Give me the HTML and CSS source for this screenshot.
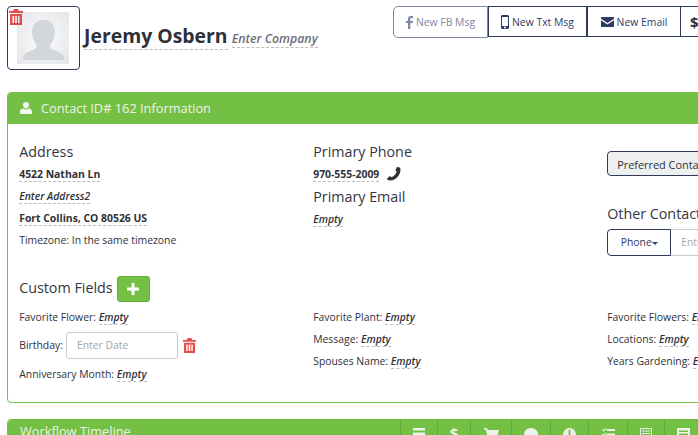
FILE: index.html
```html
<!DOCTYPE html>
<html lang="en">
<head>
  <meta charset="UTF-8" />
  <title>Contact 162</title>
  <link rel="stylesheet" href="styles.css">
</head>
<body>
  <div class="page">
    <div class="top">
      <div class="contact-head">
        <div class="avatar">
          <div class="avatar-img">
            <svg width="52" height="52" viewBox="0 0 52 52"><path fill="#d3d6da" d="M26 8c-7 0-11 5-11 12 0 5 2 9 4 12 1 2 1 4-1 5-3 2-9 3-11 6-1 1-1 3-1 5h41c0-2 0-4-1-5-2-3-8-4-11-6-2-1-2-3-1-5 2-3 4-7 4-12 0-7-4-12-11-12z"/></svg>
          </div>
          <svg class="avatar-trash" width="14" height="16" viewBox="0 0 14 16"><path fill="#e0504f" d="M0 2h4l1-2h4l1 2h4v2H0zM1 5h12v11H1zM3.500 7v7h1.500V7zM6.200 7v7h1.600V7zM9 7v7h1.500V7z" fill-rule="evenodd"/></svg>
        </div>
        <h1 class="name"><span class="editable">Jeremy Osbern</span> <small class="editable company">Enter Company</small></h1>
      </div>
      <div class="msg-btns">
        <a class="msg-btn msg-fb"><svg width="7" height="13" viewBox="0 0 7 13"><path fill="#7d88a3" d="M2 13V7H0V5h2V3c0-2 1-3 3-3h2v2H5.500C4.500 2 4.300 2.500 4.300 3.200V5H7L6.600 7H4.300v6z"/></svg> New FB Msg</a>
        <a class="msg-btn msg-txt"><svg width="8" height="14" viewBox="0 0 8 14"><path fill="#2d3a66" fill-rule="evenodd" d="M1.500 0h5C7.400 0 8 .6 8 1.500v11c0 .9-.6 1.500-1.500 1.500h-5C.6 14 0 13.400 0 12.500v-11C0 .6.600 0 1.500 0zM1 2v9h6V2zM4 11.500a1 1 0 1 0 0 2 1 1 0 0 0 0-2z"/></svg> New Txt Msg</a>
        <a class="msg-btn msg-email"><svg width="13" height="10" viewBox="0 0 13 10"><path fill="#2d3a66" d="M1 0h11c.6 0 1 .4 1 1v.8L6.500 6 0 1.800V1c0-.6.400-1 1-1zM0 3.300l6.500 4.200L13 3.300V9c0 .6-.4 1-1 1H1c-.6 0-1-.4-1-1z"/></svg> New Email</a>
        <a class="msg-btn msg-money"><b>$</b> New Invoice</a>
      </div>
    </div>

    <section class="panel">
      <div class="panel-heading">
        <svg width="12" height="12" viewBox="0 0 12 12"><path fill="#f1f5ee" d="M6 0a3 3 0 0 1 3 3.200C9 5 7.700 6.400 6 6.400S3 5 3 3.200A3 3 0 0 1 6 0zM3.200 6.600C4 7.200 5 7.500 6 7.500s2-.3 2.800-.9C10.800 6.800 12 8 12 10v1c0 .6-.4 1-1 1H1c-.6 0-1-.4-1-1v-1c0-2 1.200-3.200 3.200-3.400z"/></svg>
        <span>Contact ID# 162 Information</span>
      </div>
      <div class="panel-body">
        <div class="row row-info">
          <div class="col">
            <h4>Address</h4>
            <p class="line strong"><span class="editable">4522 Nathan Ln</span></p>
            <p class="line"><em class="editable">Enter Address2</em></p>
            <p class="line strong"><span class="editable">Fort Collins,</span> <span class="editable">CO 80526 US</span></p>
            <p class="line">Timezone: In the same timezone</p>
          </div>
          <div class="col">
            <h4>Primary Phone</h4>
            <p class="line strong phone"><span class="editable">970-555-2009</span>
              <svg width="14" height="14" viewBox="0 0 14 14"><path fill="#2f3138" d="M13.500 2.500c0 6-5 11-10.500 11-.8 0-1.600-.2-2.300-.5L0 11.500l3-2.500 1.600 1.300C7 9.500 9 7 9.700 4.600L8.300 3.300 10 0l2 .3c1 .4 1.500 1.200 1.500 2.200z"/></svg>
            </p>
            <h4 class="email-title">Primary Email</h4>
            <p class="line"><em class="editable">Empty</em></p>
          </div>
          <div class="col">
            <div class="preferred">Preferred Contact Method</div>
            <h4 class="other-title">Other Contact Methods</h4>
            <div class="other-input">
              <div class="phone-btn">Phone<i class="caret"></i></div>
              <div class="enter-box">Enter Phone Number</div>
            </div>
          </div>
        </div>

        <h4 class="custom-title"><span class="custom-label">Custom Fields</span> <span class="add-btn"><svg width="12" height="12" viewBox="0 0 12 12"><path fill="#fff" d="M4.500 0h3v4.500H12v3H7.500V12h-3V7.500H0v-3h4.500z"/></svg></span></h4>
        <div class="row">
          <div class="col">
            <p class="field">Favorite Flower: <em class="editable">Empty</em></p>
            <div class="field field-date">Birthday: <div class="date-input">Enter Date</div>
              <svg width="13" height="15" viewBox="0 0 14 16"><path fill="#e0504f" fill-rule="evenodd" d="M0 2h4l1-2h4l1 2h4v2H0zM1 5h12v11H1zM3.500 7v7h1.500V7zM6.200 7v7h1.600V7zM9 7v7h1.500V7z"/></svg>
            </div>
            <p class="field">Anniversary Month: <em class="editable">Empty</em></p>
          </div>
          <div class="col">
            <p class="field">Favorite Plant: <em class="editable">Empty</em></p>
            <p class="field">Message: <em class="editable">Empty</em></p>
            <p class="field">Spouses Name: <em class="editable">Empty</em></p>
          </div>
          <div class="col">
            <p class="field">Favorite Flowers: <em class="editable">Empty</em></p>
            <p class="field">Locations: <em class="editable">Empty</em></p>
            <p class="field">Years Gardening: <em class="editable">Empty</em></p>
          </div>
        </div>
      </div>
    </section>

    <section class="panel timeline">
      <div class="panel-heading timeline-heading">
        <span>Workflow Timeline</span>
        <div class="tabs">
          <div class="tab tab-a"><svg width="12" height="12" viewBox="0 0 12 12"><path fill="#eef3ea" d="M0 0h12v2.500H0zM0 4.500h12V7H0zM0 9h12v2.500H0z"/></svg></div>
          <div class="tab tab-b">$</div>
          <div class="tab tab-c"><svg width="15" height="14" viewBox="0 0 15 14"><path fill="#eef3ea" d="M0 0h3l.5 2H15l-1.500 6H4.500L5 10h8v1.500H4L1.800 1.500H0z"/></svg></div>
          <div class="tab tab-d"><svg width="14" height="12" viewBox="0 0 14 12"><ellipse fill="#eef3ea" cx="7" cy="6" rx="7" ry="6"/></svg></div>
          <div class="tab tab-e"><svg width="13" height="13" viewBox="0 0 14 14"><circle fill="#eef3ea" cx="7" cy="7" r="7"/><path fill="#74c044" d="M6 2h2v5.500H6z"/></svg></div>
          <div class="tab tab-d"><svg width="13" height="12" viewBox="0 0 13 12"><path fill="#eef3ea" d="M5 1h8v2H5zM5 5.500h8v2H5zM0 2l1-1 1 1 2-2 .7.7L2 3.500zM0 6.500l1-1 1 1 2-2 .7.7L2 8z"/></svg></div>
          <div class="tab tab-a"><svg width="12" height="12" viewBox="0 0 12 12"><path fill="none" stroke="#eef3ea" d="M.5.500h11v11H.5zM2 3h8M2 5.500h8M2 8h8"/></svg></div>
          <div class="tab tab-last"><svg width="13" height="12" viewBox="0 0 13 12"><path fill="#eef3ea" fill-rule="evenodd" d="M0 0h13v12H0zM2 2.500v1.500h9V2.500zM2 5.500V7h9V5.500z"/></svg></div>
        </div>
      </div>
    </section>
  </div>
</body>
</html>
```

FILE: styles.css
```css
html, body {
  margin: 0;
  height: 435px;
  overflow: hidden;
}

body {
  font-family: "Open Sans", sans-serif;
  font-size: 10.400px;
  color: #2f3138;
  background-color: #fff;
}

.page {
  width: 906px;
  padding: 6px 0 0 7px;
}

/* top row */
.top {
  display: flex;
  justify-content: space-between;
  height: 86px;
}

.contact-head {
  display: flex;
  align-items: flex-start;
}

.avatar {
  position: relative;
  box-sizing: border-box;
  width: 73px;
  height: 64px;
  border: 1px solid #2d3a5e;
  border-radius: 4px;
  padding: 5px 0 0 9px;
}

.avatar-img {
  width: 52px;
  height: 52px;
  background: radial-gradient(circle, #f4f5f6 30%, #e4e5e7 100%);
}

.avatar-img svg {
  display: block;
}

.avatar-trash {
  position: absolute;
  left: 1px;
  top: 2px;
}

.name {
  margin: 16px 0 0 4px;
  font-size: 19.400px;
  line-height: 27px;
  font-weight: 700;
  white-space: nowrap;
}

.company {
  font-size: 12.300px;
  font-weight: 600;
  font-style: italic;
  color: #6b6e76;
  margin-left: -1px;
}

.editable {
  border-bottom: 1px dashed #bbb;
}

.msg-btns {
  display: flex;
  align-items: flex-start;
  margin-left: auto;
}

.msg-btn {
  box-sizing: border-box;
  display: flex;
  align-items: center;
  justify-content: center;
  gap: 3px;
  height: 31px;
  font-size: 10.400px;
  color: #2d3a66;
  border: 1px solid #2d3a5e;
  border-left-width: 0;
  white-space: nowrap;
}

.msg-fb {
  width: 95px;
  height: 32px;
  border-left-width: 1px;
  border-color: #7d88a3;
  border-radius: 5px 0 0 5px;
  color: #7d88a3;
}

.msg-txt {
  width: 100px;
  border-left-width: 1px;
  border-right-width: 2px;
}

.msg-email {
  width: 93px;
}

.msg-money {
  width: 232px;
  justify-content: flex-start;
  padding-left: 9px;
}

.msg-money b {
  font-size: 15px;
  color: #2f3138;
}

/* panels */
.panel {
  border: 1px solid #74c044;
  border-radius: 4px;
  overflow: hidden;
}

.panel-heading {
  display: flex;
  align-items: center;
  gap: 9px;
  height: 31px;
  padding: 0 0 2px 12px;
  box-sizing: border-box;
  background-color: #74c044;
  color: #eef3ea;
  font-size: 12.800px;
}

.panel-body {
  padding: 18px 11px 14px 11.200px;
}

.row {
  display: flex;
}

.row-info {
  height: 134px;
}

.col {
  width: 294px;
  flex-shrink: 0;
}

h4 {
  margin: 0;
  font-size: 14.300px;
  line-height: 19px;
  font-weight: 400;
  color: #33363e;
}

.line {
  margin: 5px 0 0;
  line-height: 17px;
  height: 17px;
  white-space: nowrap;
}

.line em {
  font-weight: 600;
}

.strong {
  font-weight: 700;
}

.phone svg {
  margin-left: 5px;
  vertical-align: -3px;
}

.email-title {
  margin-top: 4px;
}

.preferred {
  box-sizing: border-box;
  width: 200px;
  height: 25px;
  margin-top: 9px;
  padding-left: 9px;
  line-height: 26px;
  font-size: 10.900px;
  white-space: nowrap;
  background-color: #eef0f0;
  border: 1px solid #2d3a5e;
  border-radius: 4px;
}

.other-title {
  margin-top: 28px;
  white-space: nowrap;
}

.other-input {
  display: flex;
  margin-top: 6px;
}

.phone-btn {
  box-sizing: border-box;
  width: 64px;
  height: 27px;
  line-height: 25px;
  text-align: center;
  font-size: 10.400px;
  color: #2d3a66;
  border: 1px solid #2d3a5e;
  border-radius: 4px 0 0 4px;
}

.caret {
  display: inline-block;
  vertical-align: middle;
  border-top: 3px solid #2d3a66;
  border-left: 3px solid transparent;
  border-right: 3px solid transparent;
}

.enter-box {
  box-sizing: border-box;
  width: 200px;
  height: 27px;
  line-height: 25px;
  padding-left: 10px;
  font-size: 10.400px;
  color: #aaa;
  border: 1px solid #ccc;
  border-left: 0;
  white-space: nowrap;
}

.custom-title {
  display: flex;
  align-items: center;
  gap: 4px;
  height: 26px;
}

.custom-label {
  margin-bottom: 3px;
}

.add-btn {
  display: flex;
  align-items: center;
  justify-content: center;
  box-sizing: border-box;
  width: 33px;
  height: 26px;
  background-color: #74c044;
  border: 1px solid #69ad3d;
  border-radius: 3px;
}

.field {
  margin: 0 0 5px;
  line-height: 17px;
  white-space: nowrap;
}

.col > .field:first-child {
  margin-top: 7px;
}

.field em {
  font-weight: 600;
}

.field-date {
  display: flex;
  align-items: center;
  gap: 3px;
  margin: 6px 0 7px;
}

.date-input {
  box-sizing: border-box;
  width: 112px;
  height: 27px;
  line-height: 25px;
  padding-left: 10px;
  font-size: 10.400px;
  color: #a4a4a4;
  border: 1px solid #ccc;
  border-radius: 3px;
  margin-right: 2px;
}

.timeline {
  margin-top: 16px;
}

.timeline-heading {
  align-items: flex-start;
  justify-content: space-between;
  height: 60px;
  padding-bottom: 0;
}

.timeline-heading > span {
  padding-top: 2px;
}

.tabs {
  display: flex;
  width: 512px;
  height: 30px;
}

.tab {
  box-sizing: border-box;
  display: flex;
  justify-content: center;
  width: 37px;
  padding-top: 8px;
  border-left: 1px solid #63a83a;
}

.tab-b {
  width: 33px;
  padding-top: 3px;
  font-size: 15px;
  font-weight: 700;
}

.tab-c {
  width: 41px;
}

.tab-d {
  width: 39px;
}

.tab-e {
  width: 38px;
}

.tab-last {
  width: 248px;
  justify-content: flex-start;
  padding-left: 12px;
}
```
